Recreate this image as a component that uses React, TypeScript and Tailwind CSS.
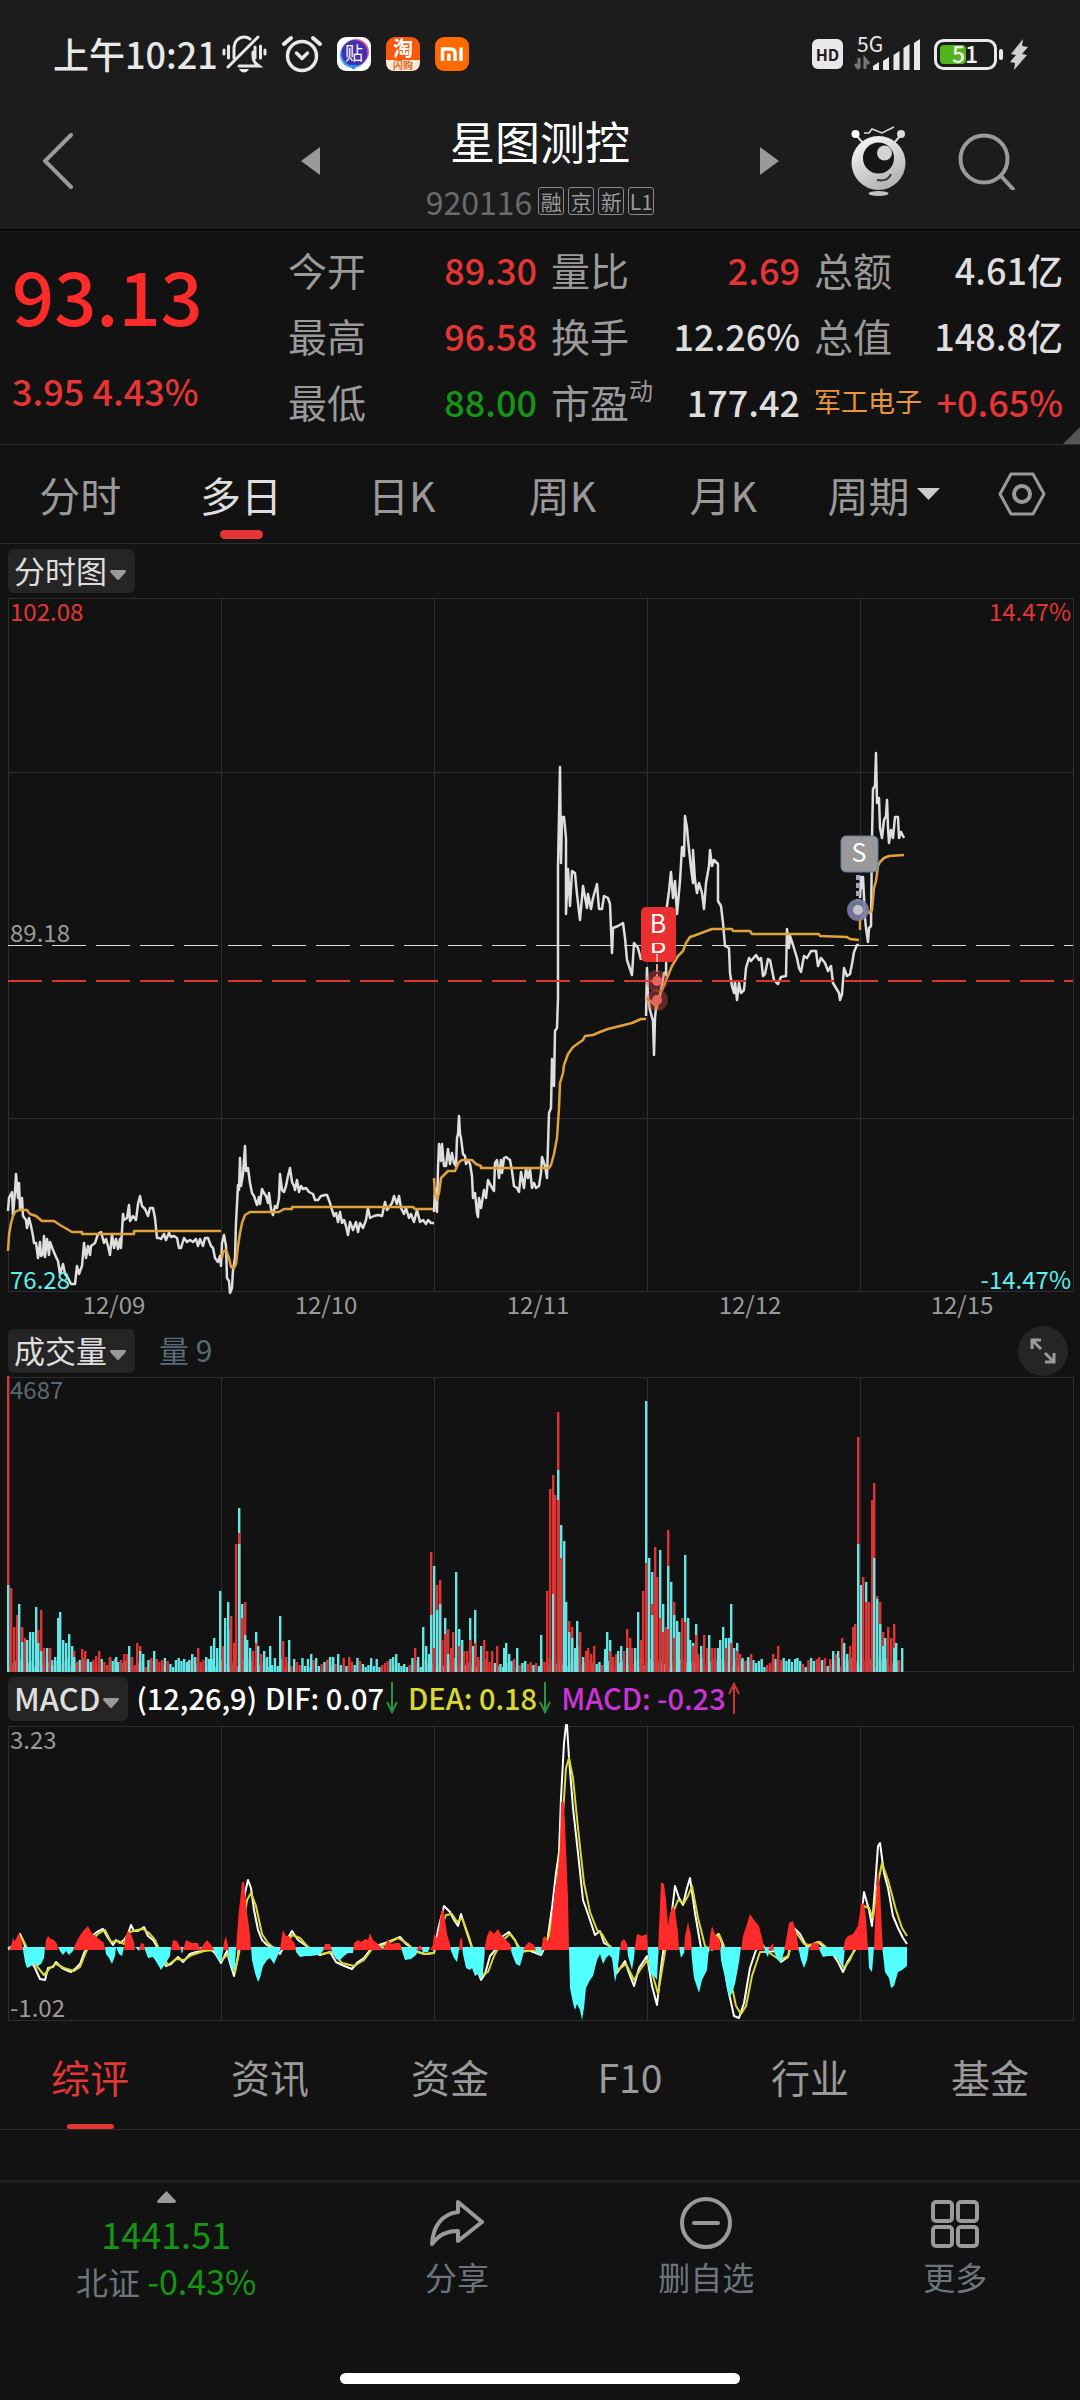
import { useState } from 'react';

type Point = [number, number];

// Intraday price and average price, one line per trading day
const PRICE_DAYS = [
  '8,613 9,600 12,594 13,617 15,594 16,576 18,600 19,585 20,610 22,600 23,618 26,622 27,630 29,620 31,628 33,638 34,645 36,645 37,652 38,660 40,644 41,658 43,656 44,638 45,659 47,641 49,657 50,644 53,652 56,659 58,663 60,676 63,666 65,676 68,680 71,686 75,686 77,668 79,676 82,668 84,645 86,660 88,648 90,657 91,648 95,645 98,636 101,634 104,645 106,641 108,648 110,657 112,636 114,650 116,641 118,651 120,641 121,650 123,616 124,622 127,620 129,607 130,623 133,618 136,622 138,606 140,598 142,608 145,611 148,618 150,610 153,610 155,620 157,640 159,640 161,641 164,636 166,642 169,635 171,639 174,638 177,640 179,650 181,650 184,640 187,644 190,642 193,644 196,641 198,648 200,641 203,648 205,640 208,640 211,648 213,650 215,660 218,664 220,658 221,668 222,645 224,637 226,648 227,680 229,683 230,695 232,690 233,672 235,660 236,625 238,587 239,592 240,560 241,588 243,576 245,548 246,573 248,570 250,585 252,595 254,598 257,607 259,599 260,606 262,591 264,595 266,598 268,605 269,595 271,611 273,617 275,608 277,610 279,600 280,576 282,592 284,594 286,588 288,578 290,570 292,584 294,588 295,592 297,582 299,594 301,588 303,591 306,590 309,594 313,596 315,602 318,602 321,598 325,597 327,597 330,605 332,612 334,618 336,615 338,624 340,614 342,625 344,622 346,628 348,637 350,624 353,632 356,624 358,634 360,625 363,630 366,622 368,610 370,620 374,618 378,617 382,618 385,604 387,612 390,608 392,605 394,598 397,606 399,598 401,610 404,616 406,610 409,620 411,616 414,624 417,612 420,624 423,622 426,626 428,622 431,625 434,625',
  '434,614 435,590 437,614 438,570 439,546 441,563 442,546 444,568 446,568 448,551 450,566 452,555 454,565 456,568 457,540 458,536 459,518 460,536 461,540 463,556 465,558 466,566 468,562 470,566 472,578 473,600 475,595 477,615 478,619 479,600 481,610 484,592 486,600 488,582 491,588 494,593 495,565 497,562 499,580 501,562 502,575 504,560 506,559 510,562 512,573 514,588 517,590 519,594 521,574 523,585 524,590 526,570 528,580 530,571 532,590 534,585 536,590 539,588 541,575 542,559 545,568 547,580 549,515 551,510 552,461 554,488 555,433 557,430 558,400 558,269 560,169 561,265 562,219 564,219 566,240 566,316 568,271 570,308 572,273 575,275 576,286 577,296 580,322 583,288 587,310 588,296 591,311 593,300 597,286 599,311 602,311 604,298 608,300 610,306 612,355 613,330 618,328 623,325 625,340 627,362 632,377 634,345 638,350 641,362',
  '646,418 647,370 648,400 650,412 653,423 654,457 655,420 656,410 660,398 664,375 666,377 667,308 669,293 671,274 673,300 675,283 677,316 680,283 682,249 684,258 685,218 687,230 688,242 691,270 693,285 693,252 695,282 697,295 699,285 702,295 704,311 706,285 709,268 710,252 712,268 714,262 718,266 718,303 721,308 723,325 725,348 729,350 730,375 732,388 734,395 735,384 737,402 739,385 741,395 744,392 746,370 749,360 751,363 756,357 759,362 761,360 763,378 765,376 768,361 770,362 774,382 778,386 781,379 786,378 787,331 789,350 790,338 793,347 797,360 799,370 801,374 804,358 807,360 811,353 816,353 818,368 821,360 825,365 828,373 831,368 833,385 836,390 839,395 840,402 842,396 844,370 847,378 850,376 852,366 854,354 857,347 859,347',
  '860,300 861,279 862,290 863,279 865,320 866,330 868,344 869,330 871,328 872,240 873,191 875,188 876,155 877,205 879,200 880,230 882,240 884,222 886,218 887,202 888,230 889,245 891,232 893,240 895,219 898,219 899,240 901,234 904,240',
];

const AVERAGE_DAYS = [
  '8,653 9,637 11,625 13,618 15,614 19,612 27,612 30,616 36,618 42,623 54,623 60,627 72,634 82,634 82,636 134,636 134,633 221,633',
  '222,660 223,654 226,652 229,660 231,669 234,670 236,666 238,648 240,635 242,625 245,617 250,614 279,614 284,611 292,611 292,609 413,609 415,611 433,611',
  '434,580 435,595 437,602 439,595 441,580 445,576 448,573 455,573 459,564 462,562 472,562 476,566 481,568 481,570 549,570 551,567 554,556 557,540 559,510 560,485 563,475 564,467 568,456 573,449 583,442 585,438 593,437 600,434 608,431 620,428 632,425 641,421 646,421',
  '647,400 649,402 655,407 657,410 658,400 662,392 667,380 672,368 678,358 683,353 686,345 690,339 696,337 704,334 712,331 732,331 733,333 750,333 752,336 819,336 820,338 847,339 850,341 859,342',
  '860,332 860,322 866,313 869,315 872,312 874,290 876,283 878,268 880,264 884,260 889,258 904,257',
];

// [x, volume], a negative volume is a falling minute
const VOLUME: Point[] = [
  [8, 296], [8, -87], [11, 84], [14, 45], [17, 57], [19, -68], [22, 45], [22, -30], [25, 34], [27, -32], [30, -40], [33, -40], [36, -65], [38, 42], [38, -29], [41, 62], [41, -21], [44, 24], [47, -24], [50, 24], [52, -7], [55, -15], [58, -54], [60, -60], [63, -32], [66, -29], [69, -38], [72, -26], [74, 21], [74, -15], [77, 10], [82, 23], [85, 21], [93, 10], [96, 16], [99, 21], [110, 15], [116, -15], [124, 18], [127, 18], [129, -26], [132, 15], [137, 29], [140, 26], [140, -21], [143, -18], [154, -21], [162, 12], [189, -12], [192, -18], [195, -15], [198, 24], [206, -15], [209, -13], [211, -26], [214, -34], [217, -24], [220, -81], [223, 26], [225, -54], [228, -70], [228, -42], [231, 56], [234, 29], [236, 128], [239, -164], [239, 139], [239, -128], [242, -68], [242, 54], [245, 70], [245, -37], [247, -32], [250, -24], [253, 21], [256, -40], [256, 29], [258, -26], [261, 18], [264, -21], [267, -15], [270, -26], [280, -56], [283, 31], [286, 15], [289, -32], [311, -18], [330, -15], [333, -15], [338, -18], [349, 15], [393, -15], [396, -18], [415, 24], [418, -15], [423, -45], [426, -26], [429, -18], [431, 120], [431, -57], [434, -106], [434, 24], [437, 87], [437, -62], [440, 92], [440, -68], [442, 32], [445, -54], [445, 38], [448, 43], [448, -18], [451, 24], [453, 40], [456, -100], [459, -43], [459, 26], [462, -32], [464, 21], [467, 21], [470, -54], [470, 32], [473, -26], [475, -62], [475, 29], [478, 15], [481, -26], [484, 32], [487, 21], [492, 21], [497, 26], [504, -24], [506, -29], [509, -18], [517, -24],
  [541, -37], [547, 81], [550, 183], [553, 197], [553, -78], [555, 177], [558, 260], [558, -202], [558, 172], [561, -147], [561, 114], [564, -131], [566, -70], [569, 51], [569, -40], [572, 45], [572, -34], [575, -24], [577, -51], [577, -26], [580, 40], [583, -15], [586, 21], [588, 24], [591, 18], [594, 26], [605, -23], [607, -40], [610, -32], [610, 21], [613, 15], [616, 18], [618, -21], [621, -26], [624, 21], [627, 43], [627, -24], [630, 34], [632, 24], [635, -24], [638, -60], [641, 32], [643, 81], [646, -271], [646, 109], [649, -114], [652, -100], [652, 68], [652, -57], [655, 125], [657, 95], [660, -122], [660, 54], [663, -68], [663, 40], [666, 45], [668, 142], [668, -106], [668, 43], [671, -90], [674, 70], [674, -57], [674, 34], [677, -51], [679, -40], [682, 54], [685, -117], [685, 50], [688, -54], [690, -32], [693, -29], [693, 26], [696, -48], [696, 37], [698, 18], [701, -26], [704, 37], [707, 24], [709, -37], [712, 24], [715, 24], [718, -24], [720, -32], [723, -45], [726, -34], [726, 24], [729, -34], [731, -68], [731, 29], [734, -24], [737, -29], [737, 21], [740, 18], [742, -12], [748, -15], [751, 18], [773, 18], [778, 26], [795, -13], [819, 15], [830, 13], [833, -21], [836, 18], [838, -21], [842, 34], [844, -29], [847, -18], [850, 26], [853, 45], [855, 48], [858, 235], [858, -128], [861, -87], [863, 95], [866, -90], [866, 70], [869, 70], [872, 172], [874, 189], [874, -114], [877, 76], [877, -73], [880, 70], [880, -48], [883, 40], [883, -26], [885, -34], [888, 45], [891, 34], [894, 48], [894, -24], [896, -29], [899, 12], [902, -24],
];

// Quiet minutes between the bursts
const QUIET_VOLUME: Point[] = Array.from({ length: 324 }, (_, i) => {
  const level = 5 + ((i * 37 + ((i * i) % 23) * 5) % 10);
  return [8 + i * 2.75, (i * 29 + ((i * i) % 7)) % 5 < 2 ? level : -level];
});

const MACD_BARS: Point[] = [
  [8, 0], [9, -3], [11, 2], [13, 10], [15, 6], [18, 14], [20, 14], [22, 4], [23, -2], [25, -14], [27, -20], [31, -18], [34, -15], [38, -18], [41, -16], [44, -10], [45, 0], [46, 8], [48, 12], [51, 9], [54, 8], [57, 4], [58, 0], [60, -3], [63, -7], [66, -3], [69, -7], [73, -3], [75, 3], [78, 9], [81, 14], [84, 18], [88, 22], [91, 16], [95, 12], [100, 8], [104, 5], [105, 0], [106, -6], [109, -10], [112, -16], [115, -8], [116, 0], [119, -6], [122, -8], [124, 0], [125, 10], [128, 17], [131, 14], [134, 6], [135, 0], [139, -3], [141, 5], [144, 4], [145, -2], [148, -10], [153, -9], [157, -15], [161, -22], [165, -16], [170, -8], [171, 0], [173, 8], [177, 7], [180, 1], [182, -6], [184, 1], [186, 8], [192, 5], [198, 5], [200, -1], [203, 3], [207, 8], [212, 2], [214, -3], [217, -10], [221, -14], [223, -3], [224, 6], [226, 12], [228, 2], [229, -10], [232, -22], [235, -20], [236, 0], [237, 14], [239, 38], [241, 56], [242, 66], [244, 66], [245, 55], [247, 35], [250, 14], [251, 0], [252, -12], [255, -25], [258, -34], [260, -30], [263, -18], [267, -12], [270, -10], [274, -16], [277, -9], [280, -2], [281, 6], [283, 18], [286, 12], [289, 12], [292, 8], [295, 4], [296, -4], [300, -9], [306, -8], [311, -8], [318, -7], [323, -3], [325, 4], [330, 4], [332, -3], [336, -11], [340, -12], [344, -8], [348, -5], [353, -5], [354, 5], [358, 8], [361, 6], [365, 9], [368, 8], [370, 15], [373, 8], [378, 4], [383, -1], [386, 4], [388, 9], [391, 4], [396, 5], [400, 5], [402, -3], [405, -12], [411, -11], [416, -7], [420, 3], [423, -4], [428, -4], [430, 0], [433, 3], [434, 14], [437, 10], [439, 20], [441, 35], [443, 40], [445, 28], [447, 14], [450, 4], [451, -3], [454, -10], [457, -14], [459, -2], [460, 8], [462, 10], [463, -6], [466, -20], [470, -22], [472, -20], [475, -28], [478, -26], [482, -32], [484, -14], [485, 2], [487, 12], [490, 18], [494, 14], [498, 19], [502, 12], [506, 8], [510, 4], [512, -6], [516, -16], [520, -18], [523, -7], [525, 2], [529, 6], [534, 3], [536, -3], [541, -8], [543, 10], [545, 12], [547, 8], [549, 6], [551, 20], [553, 40], [555, 60], [557, 68], [560, 100], [561, 146], [564, 146], [566, 100], [568, 50], [569, 0], [570, -40], [573, -55], [575, -62], [577, -56], [580, -62], [582, -72], [584, -60], [586, -40], [590, -32], [593, -28], [597, -12], [600, -6], [603, -16], [606, -10], [609, -7], [612, -10], [615, -34], [617, -25], [619, -10], [620, 0], [621, 6], [624, 9], [627, 4], [628, -8], [632, -22], [634, -10], [635, 2], [637, 14], [642, 12], [647, 14], [648, -6], [650, -26], [654, -28], [657, -32], [658, -10], [659, 20], [661, 66], [664, 64], [666, 48], [668, 22], [670, 35], [673, 42], [675, 38], [678, 15], [679, 0], [681, -10], [684, -5], [685, 12], [688, 26], [691, 12], [692, -12], [694, -30], [696, -36], [699, -45], [702, -32], [707, -22], [709, 0], [710, 12], [712, 22], [715, 14], [720, 8], [721, -12], [725, -30], [729, -50], [732, -45], [735, -36], [739, -14], [741, 0], [743, 12], [747, 24], [750, 34], [754, 28], [759, 22], [763, 6], [765, -4], [768, -9], [770, 1], [773, 5], [774, -3], [777, -11], [781, -15], [784, -4], [786, 8], [789, 25], [793, 27], [796, 16], [799, -3], [801, -12], [804, -20], [807, -12], [809, 0], [812, 5], [818, 5], [820, -3], [823, -9], [828, -8], [834, -8], [839, -12], [843, -20], [845, 8], [848, 12], [853, 14], [858, 22], [861, 44], [864, 45], [866, 30], [868, 0], [869, -20], [872, -24], [874, 0], [876, 50], [878, 80], [880, 60], [882, 15], [883, -6], [885, -24], [889, -30], [891, -40], [894, -38], [898, -24], [902, -22], [907, -18],
];

const DIF: Point[] = [
  [8, -1], [14, 2], [20, 14], [24, 5], [28, -8], [35, -20], [40, -31], [45, -32], [48, -20], [53, -19], [56, -14], [62, -20], [66, -22], [71, -24], [76, -20], [80, -16], [84, -5], [88, 2], [92, 12], [97, 16], [103, 19], [108, 10], [113, 3], [116, 8], [120, 5], [124, 8], [128, 14], [131, 23], [134, 17], [138, 17], [144, 21], [148, 12], [153, 8], [156, 3], [160, -8], [166, -18], [171, -16], [178, -9], [183, -14], [190, -6], [196, -4], [203, -3], [210, -1], [215, -5], [221, -15], [227, -3], [230, -15], [234, -28], [238, -8], [241, 30], [245, 55], [248, 68], [251, 60], [254, 38], [258, 18], [262, 8], [267, 3], [275, 0], [280, -6], [284, 2], [288, 10], [292, 17], [298, 8], [305, 3], [312, -3], [320, -7], [330, -4], [336, -14], [342, -17], [352, -21], [358, -14], [364, -10], [370, -2], [376, 2], [388, 6], [400, 11], [406, 4], [412, 0], [418, -4], [426, -6], [434, -5], [438, 18], [444, 42], [450, 36], [454, 28], [458, 22], [461, 34], [466, 18], [472, 0], [476, -18], [481, -32], [485, -26], [490, -8], [497, 0], [503, 12], [509, 16], [515, 8], [519, -2], [528, -2], [541, -7], [547, 5], [552, 40], [556, 75], [559, 95], [561, 150], [564, 205], [566, 223], [567, 223], [569, 190], [573, 140], [578, 95], [583, 48], [588, 34], [595, 13], [600, 17], [604, 5], [611, 1], [617, -25], [625, -13], [629, -25], [634, -38], [639, -20], [647, -8], [652, -38], [657, -57], [661, -20], [665, 10], [670, 20], [675, 62], [679, 50], [683, 43], [687, 60], [690, 70], [695, 35], [701, 0], [707, -5], [714, 8], [718, 14], [722, 5], [727, -36], [734, -68], [739, -70], [744, -55], [750, -20], [756, -2], [762, 4], [768, -4], [775, -3], [781, -14], [788, -9], [794, 20], [800, 14], [807, 1], [818, 6], [825, 0], [832, -5], [838, -14], [843, -24], [848, -13], [855, -2], [861, 25], [864, 56], [869, 38], [872, 22], [875, 60], [878, 102], [880, 105], [884, 75], [888, 60], [893, 32], [898, 20], [903, 10], [907, 4],
];

const DEA: Point[] = [
  [8, 0], [16, 3], [22, 10], [28, -2], [35, -16], [44, -27], [50, -20], [56, -16], [64, -20], [74, -23], [80, -19], [86, -4], [92, 8], [98, 14], [105, 18], [111, 6], [118, 7], [124, 4], [130, 16], [137, 18], [143, 19], [149, 15], [155, 8], [160, -3], [168, -17], [176, -11], [184, -12], [192, -7], [204, -3], [214, -2], [222, -12], [228, -6], [232, -15], [235, -24], [239, -5], [243, 22], [247, 48], [251, 55], [256, 42], [262, 14], [268, 5], [276, -2], [284, 0], [292, 13], [300, 10], [308, 1], [322, -6], [332, -4], [342, -15], [354, -18], [364, -12], [372, -1], [382, 2], [398, 10], [408, 4], [414, -3], [424, -6], [434, -5], [440, 18], [446, 33], [452, 34], [457, 26], [462, 30], [468, 14], [474, -5], [483, -27], [488, -24], [494, -8], [502, 7], [510, 14], [516, 6], [522, -4], [532, -2], [541, -5], [549, 12], [556, 50], [562, 120], [566, 180], [569, 190], [573, 170], [578, 120], [584, 65], [590, 36], [597, 18], [602, 14], [607, 5], [613, -2], [618, -22], [626, -16], [634, -32], [640, -22], [647, -12], [653, -28], [658, -46], [662, -22], [667, 8], [673, 35], [678, 48], [684, 45], [688, 52], [692, 62], [698, 30], [705, 2], [712, -2], [719, 14], [724, 2], [730, -30], [736, -58], [741, -66], [746, -58], [752, -28], [760, -4], [768, -4], [780, -12], [788, -8], [796, 16], [804, 4], [810, 3], [820, 6], [828, -1], [838, -10], [844, -20], [850, -12], [858, 8], [864, 42], [869, 40], [873, 30], [877, 60], [882, 85], [888, 68], [896, 38], [902, 20], [907, 12],
];

const DAY_LINES = [221, 434, 647, 860];
const DATES = ['12/09', '12/10', '12/11', '12/12', '12/15'];

const ZERO = 222;
const toPoints = (data: Point[]) => data.map(([x, v]) => `${x},${ZERO - v}`).join(' ');
const risePoints = `8,${ZERO + 2} ${MACD_BARS.map(([x, v]) => `${x},${v > 0 ? ZERO - v : ZERO + 2}`).join(' ')} 907,${ZERO + 2}`;
const fallPoints = `8,${ZERO - 1} ${MACD_BARS.map(([x, v]) => `${x},${v < 0 ? ZERO - v : ZERO - 1}`).join(' ')} 907,${ZERO - 1}`;

const Frame = ({ height, rows = [] }: { height: number; rows?: number[] }) => (
  <g stroke="#2e2e2e" strokeWidth="1" shapeRendering="crispEdges" fill="none">
    <rect x="8" y="0.5" width="1065" height={height - 1} />
    {DAY_LINES.map((x) => (
      <line key={x} x1={x} x2={x} y1="0" y2={height} />
    ))}
    {rows.map((y) => (
      <line key={y} x1="8" x2="1073" y1={y} y2={y} />
    ))}
  </g>
);

const Caret = () => (
  <svg className="mt-2 h-[10px] w-[16px]" viewBox="0 0 16 10">
    <path d="M1 0h14q2 1 0 3L9 9.500q-1 1-2 0L1 3q-2-2 0-3z" fill="#9a9a9a" />
  </svg>
);

const Chip = ({ label }: { label: string }) => (
  <button className="flex h-11 items-center gap-[3px] rounded-md bg-[#252525] pr-[9px] pl-[6px] text-[31px] leading-none text-[#dedede]">
    <span className="pb-1">{label}</span>
    <Caret />
  </button>
);

const Arrow = ({ up = false }: { up?: boolean }) => (
  <svg className="ml-[2px] h-8 w-3" viewBox="0 0 12 32" fill="none" stroke={up ? '#c8372f' : '#2c9145'} strokeWidth="2">
    {up ? <path d="M6 32V1M1 12L6 2l5 10" /> : <path d="M6 0v31M1 20l5 10 5-10" />}
  </svg>
);

const StatusBar = () => (
  <div className="flex h-[108px] items-center pr-[52px] pl-[53px] text-[#e8e8e8]">
    <span className="pb-[3px] text-4xl leading-none font-medium">上午10:21</span>
    <div className="ml-1 flex items-center gap-[15px]">
      <svg className="h-[38px] w-[45px]" viewBox="0 0 45 38" fill="none" stroke="#e8e8e8" strokeWidth="3" strokeLinecap="round">
        <path d="M2 15v4M6.500 11v12M38.500 11v12M43 15v4M33 12v11" />
        <path d="M12 23V14C12 6 17 2 22 2c2.500 0 4.500.8 6 2M31 17v4c0 5 2 7 6 10H17" />
        <path d="M6 32L36 2" />
        <path d="M17 34h10q-2 3.500-5 3.500T17 34z" fill="#e8e8e8" stroke="none" />
      </svg>
      <svg className="h-[38px] w-[40px]" viewBox="0 0 40 38" fill="none" stroke="#e8e8e8" strokeLinecap="round">
        <circle cx="20" cy="21" r="14.500" strokeWidth="3.500" />
        <path d="M14.500 18l5.500 5.500 5.500-5.500" strokeWidth="3.500" strokeLinejoin="round" />
        <path d="M2 9l7-6M38 9l-7-6" strokeWidth="4" />
      </svg>
      <svg className="h-[34px] w-[34px]" viewBox="0 0 34 34">
        <rect width="34" height="34" rx="9" fill="#fff" />
        <circle cx="16" cy="18" r="13" fill="#39a5ff" />
        <circle cx="19" cy="15" r="13" fill="#ef5a8c" />
        <circle cx="17.500" cy="16" r="13" fill="#4431b0" />
        <path d="M12 28h9l-4.500 5z" fill="#2f8fe8" />
        <text x="17" y="23" textAnchor="middle" fontSize="18" fill="#fff">贴</text>
      </svg>
      <svg className="h-[34px] w-[34px] overflow-visible" viewBox="0 0 34 34">
        <rect width="34" height="34" rx="9" fill="#f9590b" />
        <path d="M0 23h34v2q0 9-9 9H9q-9 0-9-9z" fill="#fbe9d8" />
        <text x="17" y="19" textAnchor="middle" fontSize="20" fontWeight="700" fill="#fff">淘</text>
        <text x="17" y="32" textAnchor="middle" fontSize="10" fontWeight="700" fill="#e8601c">闪购</text>
      </svg>
      <svg className="h-[34px] w-[34px]" viewBox="0 0 34 34" fill="none" stroke="#fff" strokeWidth="3.500">
        <rect width="34" height="34" rx="9" fill="#ff6a00" stroke="none" />
        <path d="M7.500 24V12h8q4.500 0 4.500 4.500V24M13.800 24v-7.500M26 24V10.500" />
      </svg>
    </div>
    <div className="ml-auto flex items-center">
      <span className="flex h-[30px] w-[31px] items-center justify-center rounded-md bg-[#e8e8e8] text-base leading-none font-bold text-[#1c1c1c]">HD</span>
      <svg className="ml-[11px] h-9 w-[68px] overflow-visible" viewBox="0 0 68 36">
        <text x="3" y="16" fontSize="21" fill="#e8e8e8">5G</text>
        <path d="M5 22v10M1 28l4 5M11 33V23l4 5" stroke="#777" strokeWidth="3" fill="none" />
        <g fill="#e8e8e8">
          <path d="M19 30l6-4v8h-6zM29 25l6-4v13h-6zM39.500 19l6-4v19h-6zM49.500 12l6-4v26h-6zM60 7l6-4v31h-6z" />
        </g>
      </svg>
      <svg className="ml-[12px] h-[31px] w-[70px] overflow-visible" viewBox="0 0 70 31">
        <rect x="1.500" y="1.500" width="60" height="28" rx="8" fill="none" stroke="#e8e8e8" strokeWidth="3" />
        <rect x="6" y="6" width="26" height="19" rx="4" fill="#53b31a" />
        <rect x="65" y="10" width="4" height="11" rx="2" fill="#e8e8e8" />
        <text x="31" y="24" textAnchor="middle" fontSize="23" fontWeight="500" fill="#f0f0f0">51</text>
      </svg>
      <svg className="ml-[6px] h-[31px] w-[18px]" viewBox="0 0 18 31">
        <path d="M13 0L1 15l5 1-6 7 5 1-1 7 13-15-5-1 6-7-6-1z" fill="#d0d0d0" />
      </svg>
    </div>
  </div>
);

const StockHeader = () => (
  <div className="grid h-[121px] grid-cols-[1fr_auto_1fr] items-start">
    <div className="flex h-[106px] items-center justify-between pl-[43px]">
      <button aria-label="返回">
        <svg className="h-14 w-[30px]" viewBox="0 0 30 56" fill="none" stroke="#9a9a9a" strokeWidth="4" strokeLinecap="round">
          <path d="M28 2L2 28l26 26" />
        </svg>
      </button>
      <button aria-label="上一只">
        <svg className="h-7 w-[19px]" viewBox="0 0 19 28"><path d="M19 0v28L0 14z" fill="#9a9a9a" /></svg>
      </button>
    </div>
    <div className="flex w-[440px] flex-col items-center pt-[9px]">
      <h1 className="text-[45px] leading-[48px] text-white">星图测控</h1>
      <div className="mt-[22px] flex items-center gap-1 text-[#9a9a9a]">
        <span className="mr-[2px] text-[32px] leading-7 text-[#6b6b6b]">920116</span>
        {['融', '京', '新', 'L1'].map((tag) => (
          <span key={tag} className="flex h-7 w-[26px] items-center justify-center rounded-[3px] border border-[#8a8a8a] text-[21px] leading-none">
            {tag}
          </span>
        ))}
      </div>
    </div>
    <div className="flex h-[106px] items-center justify-between pr-[65px]">
      <button aria-label="下一只">
        <svg className="h-7 w-[19px]" viewBox="0 0 19 28"><path d="M0 0v28l19-14z" fill="#9a9a9a" /></svg>
      </button>
      <div className="flex items-center gap-[52px]">
        <button aria-label="小助手">
          <svg className="h-[70px] w-[55px]" viewBox="0 0 55 70">
            <defs>
              <linearGradient id="robot" x1="0" y1="0" x2="0.5" y2="1">
                <stop offset="0" stopColor="#fff" />
                <stop offset="1" stopColor="#b4b4b4" />
              </linearGradient>
            </defs>
            <path d="M5 9l7 8M50 9l-7 8" stroke="#ddd" strokeWidth="2" />
            <circle cx="4.500" cy="8" r="4" fill="#fff" />
            <circle cx="50" cy="8" r="4" fill="#ddd" />
            <path d="M13 7h5l3-4 10 4 12-6" fill="none" stroke="#ddd" strokeWidth="1.500" />
            <circle cx="27.500" cy="37" r="27" fill="url(#robot)" />
            <circle cx="27.500" cy="32" r="15.500" fill="#151515" />
            <circle cx="33.500" cy="27" r="7.500" fill="#d4d4d4" />
            <path d="M26 54q11 2 14-6" fill="none" stroke="#333" strokeWidth="2" />
            <ellipse cx="27.500" cy="67.500" rx="10" ry="2.500" fill="#c4c4c4" />
          </svg>
        </button>
        <button aria-label="搜索">
          <svg className="h-[58px] w-[57px]" viewBox="0 0 57 58" fill="none" stroke="#9a9a9a" strokeWidth="4" strokeLinecap="round">
            <circle cx="26" cy="27" r="23.500" />
            <path d="M43 44l12 13" />
          </svg>
        </button>
      </div>
    </div>
  </div>
);

const QUOTES = [
  { label: '今开', value: '89.30', color: 'text-[#e53535]' },
  { label: '量比', value: '2.69', color: 'text-[#e53535]' },
  { label: '总额', value: '4.61亿', color: 'text-[#dedede]' },
  { label: '最高', value: '96.58', color: 'text-[#e53535]' },
  { label: '换手', value: '12.26%', color: 'text-[#dedede]' },
  { label: '总值', value: '148.8亿', color: 'text-[#dedede]' },
  { label: '最低', value: '88.00', color: 'text-[#149614]' },
  { label: '市盈', note: '动', value: '177.42', color: 'text-[#dedede]' },
  { label: '军工电子', sector: true, value: '+0.65%', color: 'text-[#e53535]' },
];

const QuotePanel = () => (
  <section className="relative flex h-[215px] border-b border-[#2e2e2e]">
    <div className="w-[288px] shrink-0 pl-3">
      <p className="pt-6 text-[74px] leading-[80px] font-medium text-[#ff2b2b]">93.13</p>
      <p className="pt-9 text-4xl leading-[40px] font-medium text-[#e53535]">3.95 4.43%</p>
    </div>
    <dl className="grid grow grid-cols-3 content-start gap-x-[14px] pt-[6px] pr-[17px]">
      {QUOTES.map((q) => (
        <div key={q.label} className="flex h-[66px] items-center justify-between whitespace-nowrap">
          <dt className={q.sector ? 'text-[27px] text-[#e8953c]' : 'flex text-[39px] leading-none text-[#9a9a9a]'}>
            {q.sector ? <a href="#sector">{q.label}</a> : q.label}
            {q.note && <sup className="-top-1 text-2xl leading-none">{q.note}</sup>}
          </dt>
          <dd className={`text-4xl leading-none font-medium ${q.color}`}>{q.value}</dd>
        </div>
      ))}
    </dl>
    <svg className="absolute right-0 bottom-0 h-[17px] w-[17px]" viewBox="0 0 17 17"><path d="M17 0v17H0z" fill="#555" /></svg>
  </section>
);

const PERIODS = ['分时', '多日', '日K', '周K', '月K', '周期'];

const PeriodTabs = () => {
  const [active, setActive] = useState('多日');
  return (
    <nav className="grid h-[99px] grid-cols-[repeat(6,25fr)_18fr] border-b border-[#2e2e2e] text-[41px] leading-none text-[#9a9a9a]">
      {PERIODS.map((name) => (
        <button key={name} onClick={() => setActive(name)} className={`relative flex items-center justify-center gap-2 ${active === name ? 'text-[#dedede]' : ''}`}>
          {name}
          {name === '周期' && (
            <svg className="h-3 w-[23px]" viewBox="0 0 23 12"><path d="M0 0h23L11.500 12z" fill="#ccc" /></svg>
          )}
          {active === name && <span className="absolute bottom-1 h-[9px] w-[43px] rounded-full bg-[#e53535]" />}
        </button>
      ))}
      <button aria-label="设置" className="flex items-center justify-center">
        <svg className="h-[44px] w-[48px]" viewBox="0 0 48 44" fill="none" stroke="#9a9a9a" strokeWidth="3">
          <path d="M13 2h22l11 20-11 20H13L2 22z" strokeLinejoin="round" />
          <circle cx="24" cy="22" r="8" strokeWidth="4" />
        </svg>
      </button>
    </nav>
  );
};

const PriceChart = () => (
  <svg className="block h-auto w-full overflow-visible" viewBox="0 0 1080 694" fontSize="24">
    <Frame height={694} rows={[174, 520]} />
    <line x1="8" x2="1073" y1="347" y2="347" stroke="#dedede" strokeDasharray="34 10" shapeRendering="crispEdges" />
    <g fill="none" strokeWidth="2.500" strokeLinejoin="round">
      {PRICE_DAYS.map((points) => (
        <polyline key={points} points={points} stroke="#dedede" />
      ))}
      {AVERAGE_DAYS.map((points) => (
        <polyline key={points} points={points} stroke="#dfa23c" />
      ))}
    </g>
    <line x1="8" x2="1073" y1="383" y2="383" stroke="#d93636" strokeWidth="2" strokeDasharray="34 10" />

    {/* Buy and sell marks */}
    <g fontSize="25" fill="#fff" textAnchor="middle">
      <rect x="641" y="328" width="35" height="36" rx="5" fill="#e93030" />
      <text x="658" y="355">B</text>
      <rect x="641" y="309" width="35" height="36" rx="5" fill="#e93030" />
      <text x="658" y="335">B</text>
      <path d="M657 356v27" stroke="#e8a0a0" strokeWidth="2" strokeDasharray="8 2" />
      <circle cx="657" cy="383" r="11" fill="#d94a4a" opacity="0.4" />
      <circle cx="657" cy="402" r="11" fill="#d94a4a" opacity="0.4" />
      <circle cx="657" cy="383" r="5" fill="#e86060" />
      <circle cx="657" cy="402" r="5" fill="#e86060" />
      <rect x="841" y="238" width="37" height="36" rx="5" fill="#999" stroke="#5d7fa5" />
      <text x="859" y="264">S</text>
      <path d="M858 277v26" stroke="#a5a3bd" strokeWidth="4" strokeDasharray="5 3" />
      <circle cx="858" cy="312" r="11" fill="#7d7ca5" opacity="0.9" />
      <circle cx="858" cy="312" r="5" fill="#c4c4c8" />
    </g>

    <text x="10" y="23" fill="#e53535">102.08</text>
    <text x="1071" y="23" fill="#e53535" textAnchor="end">14.47%</text>
    <text x="10" y="344" fill="#9a9a9a">89.18</text>
    <text x="10" y="691" fill="#5ff0f0">76.28</text>
    <text x="1071" y="691" fill="#5ff0f0" textAnchor="end">-14.47%</text>
  </svg>
);

const VolumeChart = () => (
  <svg className="block h-auto w-full overflow-visible" viewBox="0 0 1080 295" fontSize="24">
    <Frame height={295} />
    {[...QUIET_VOLUME, ...VOLUME].map(([x, v], i) => (
      <rect key={i} x={x - 1} y={295 - Math.abs(v)} width="2.400" height={Math.abs(v)} fill={v > 0 ? '#e03434' : '#62e6e6'} />
    ))}
    <text x="10" y="22" fill="#5a6975">4687</text>
  </svg>
);

const MacdChart = () => (
  <svg className="block h-auto w-full overflow-visible" viewBox="0 0 1080 295" fontSize="24">
    <Frame height={295} />
    <g fill="none" strokeWidth="2" strokeLinejoin="round">
      <polyline points={toPoints(DIF)} stroke="#fff" />
      <polyline points={toPoints(DEA)} stroke="#d9d932" />
    </g>
    <polygon points={fallPoints} fill="#52ffff" />
    <polygon points={risePoints} fill="#ff2a2a" />
    <text x="10" y="23" fill="#9a9a9a">3.23</text>
    <text x="10" y="291" fill="#9a9a9a">-1.02</text>
  </svg>
);

const SECTIONS = ['综评', '资讯', '资金', 'F10', '行业', '基金'];

const SectionTabs = () => {
  const [active, setActive] = useState('综评');
  return (
    <nav className="grid h-[109px] grid-cols-6 border-b border-[#2e2e2e] text-[39px] leading-none text-[#9a9a9a]">
      {SECTIONS.map((name) => (
        <button key={name} onClick={() => setActive(name)} className={`relative flex items-center justify-center pt-[2px] ${active === name ? 'text-[#e53535]' : ''}`}>
          {name}
          {active === name && <span className="absolute bottom-0 h-[5px] w-[47px] rounded-full bg-[#e53535]" />}
        </button>
      ))}
    </nav>
  );
};

const BottomBar = () => (
  <footer className="border-t-[3px] border-[#1c1c1c]">
    <div className="grid h-[190px] grid-cols-[4fr_3fr_3fr_3fr] text-[32px] leading-9 text-[#6c757c]">
      <button className="flex flex-col items-center pt-2">
        <svg className="h-3 w-[19px]" viewBox="0 0 19 12"><path d="M9.500 0L19 10q0 2-2 2H2q-2 0-2-2z" fill="#9a9a9a" /></svg>
        <span className="mt-[10px] text-4xl leading-10 text-[#149614]">1441.51</span>
        <span className="mt-[10px]">北证 <span className="text-[34px] text-[#149614]">-0.43%</span></span>
      </button>
      <button className="flex flex-col items-center gap-[9px] pt-[14px]">
        <svg className="h-[52px] w-[54px]" viewBox="0 0 54 52" fill="none" stroke="#9a9a9a" strokeWidth="4" strokeLinejoin="round">
          <path d="M28 5v10C12 17 3 29 2 47c7-9 14-13 26-13v10l24-19z" />
        </svg>
        分享
      </button>
      <button className="flex flex-col items-center gap-[9px] pt-[14px]">
        <svg className="h-[52px] w-[52px]" viewBox="0 0 52 52" fill="none" stroke="#9a9a9a" strokeWidth="4" strokeLinecap="round">
          <circle cx="26" cy="26" r="24" />
          <path d="M14 26h24" />
        </svg>
        删自选
      </button>
      <button className="flex flex-col items-center gap-[9px] pt-[14px]">
        <svg className="h-[52px] w-[52px]" viewBox="0 0 52 52" fill="none" stroke="#9a9a9a" strokeWidth="4">
          <rect x="4" y="5" width="19" height="19" rx="3" />
          <rect x="29" y="5" width="19" height="19" rx="3" />
          <rect x="4" y="30" width="19" height="19" rx="3" />
          <rect x="29" y="30" width="19" height="19" rx="3" />
        </svg>
        更多
      </button>
    </div>
    <div className="mx-auto mb-4 h-[11px] w-[37%] rounded-full bg-white" />
  </footer>
);

export default function App() {
  return (
    <div className='flex min-h-screen flex-col bg-[#121212] font-["Noto_Sans_CJK_SC",sans-serif]'>
      <header className="border-b border-black bg-[#1c1c1c]">
        <StatusBar />
        <StockHeader />
      </header>
      <QuotePanel />
      <PeriodTabs />

      <main>
        <div className="flex h-[54px] items-center px-2">
          <Chip label="分时图" />
        </div>
        <PriceChart />
        <div className="grid h-[33px] grid-cols-5 pr-3 pl-2 text-center text-2xl leading-6 text-[#9a9a9a]">
          {DATES.map((date) => (
            <span key={date}>{date}</span>
          ))}
        </div>

        <div className="flex h-[52px] items-center pr-3 pl-2">
          <Chip label="成交量" />
          <span className="ml-6 pb-1 text-[30px] leading-none text-[#5a6975]">量 9</span>
          <button aria-label="全屏" className="ml-auto flex h-[50px] w-[50px] items-center justify-center rounded-full bg-[#252525]">
            <svg className="h-[26px] w-[26px]" viewBox="0 0 26 26" fill="none" stroke="#9a9a9a" strokeWidth="3">
              <path d="M11 2H2v9M2 2l9 9M15 24h9v-9M24 24l-9-9" />
            </svg>
          </button>
        </div>
        <VolumeChart />

        <div className="flex h-[54px] items-center px-2 text-[29px] leading-none font-medium text-white">
          <Chip label="MACD" />
          <span className="ml-2 pb-[3px]">(12,26,9)</span>
          <span className="ml-2 flex items-center pb-[3px]">DIF: 0.07<Arrow /></span>
          <span className="ml-[10px] flex items-center pb-[3px] text-[#d9d932]">DEA: 0.18<Arrow /></span>
          <span className="ml-[10px] flex items-center pb-[3px] text-[#cc33d6]">MACD: -0.23<Arrow up /></span>
        </div>
        <MacdChart />
      </main>

      <SectionTabs />
      <div className="min-h-[50px] grow" />
      <BottomBar />
    </div>
  );
}
